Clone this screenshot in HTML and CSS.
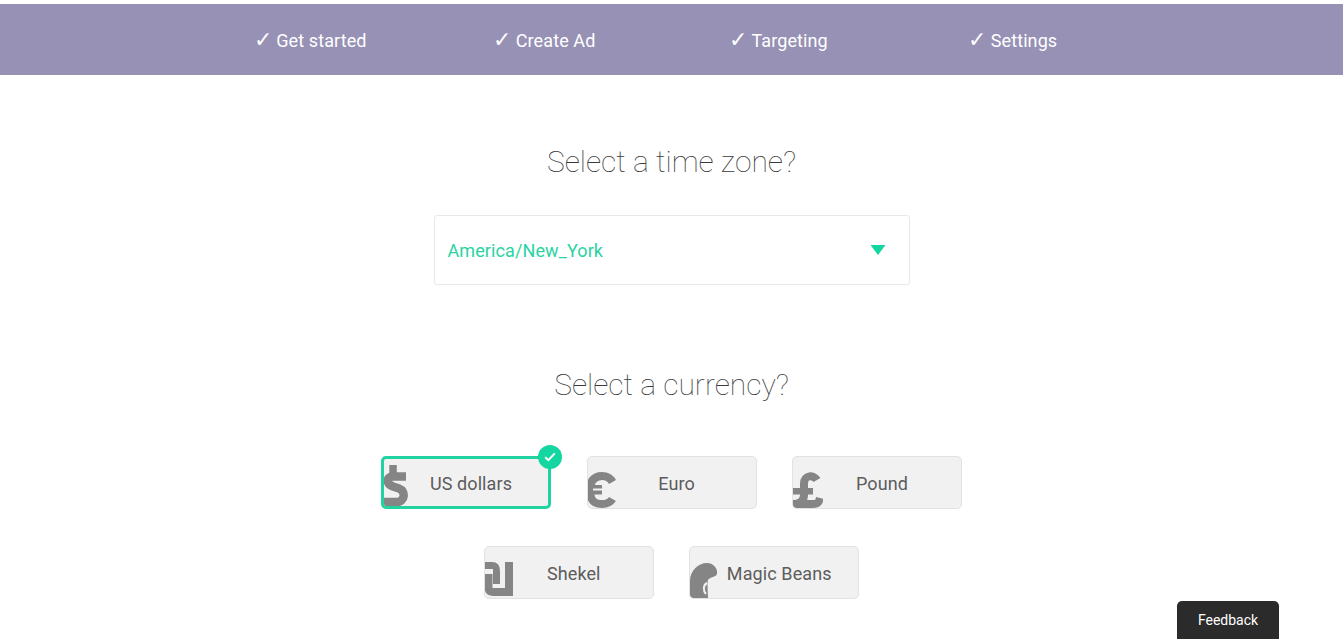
FILE: index.html
```html
<!DOCTYPE html>
<html lang="en">
<head>
<meta charset="utf-8">
<title>Select a time zone</title>
<link rel="stylesheet" href="styles.css">
</head>
<body>
<nav class="steps">
  <div class="step"><span class="check">✓</span> Get started</div>
  <div class="step"><span class="check">✓</span> Create Ad</div>
  <div class="step"><span class="check">✓</span> Targeting</div>
  <div class="step"><span class="check">✓</span> Settings</div>
</nav>
<main class="content">
  <h2 class="title">Select a time zone?</h2>
  <div class="select">
    <span>America/New_York</span>
    <svg class="caret" width="16" height="10" viewBox="0 0 16 10"><path d="M0.5 0H15.5L8 10Z"/></svg>
  </div>
  <h2 class="title title-currency">Select a currency?</h2>
  <div class="currencies">
    <div class="row">
      <div class="card card-selected">
        <div class="card-inner">
          <svg class="icon" width="30" height="47" viewBox="0 0 30 47"><rect x="5.300" y="6" width="7.500" height="12"/><rect x="5.300" y="42" width="7.500" height="6"/><path class="stroke" stroke-width="8.500" d="M22 17.500H9C2 17.500 2 25 9 27.500L15 29.500C22 32 21 43 13 43H-2"/></svg>
          <span class="label">US dollars</span>
        </div>
        <span class="badge"><svg width="12" height="10" viewBox="0 0 12 10"><path d="M1.200 5.200L4.400 8.200L10.800 1.400" fill="none" stroke="#fff" stroke-width="2"/></svg></span>
      </div>
      <div class="card">
        <div class="card-inner">
          <svg class="icon" width="30" height="51" viewBox="0 0 30 51"><path class="stroke" stroke-width="8" d="M24.500 25C22 20.500 19 19 14 19C5 19 2 25 2 33C2 42 5 47 14 47C19 47 22 46 24.500 42"/><rect x="0" y="28" width="14" height="9.500"/><rect class="gap" x="5" y="31.500" width="9" height="2"/></svg>
          <span class="label">Euro</span>
        </div>
      </div>
      <div class="card">
        <div class="card-inner">
          <svg class="icon" width="30" height="51" viewBox="0 0 30 51"><path class="stroke" stroke-width="8" d="M24 23C21 18 11 17 11 27V38C11 44 7 47 0 47H20C25 47 26 45 27 41"/><rect x="0" y="31" width="20" height="6.500"/></svg>
          <span class="label">Pound</span>
        </div>
      </div>
    </div>
    <div class="row">
      <div class="card">
        <div class="card-inner">
          <svg class="icon" width="30" height="51" viewBox="0 0 30 51"><path class="stroke" stroke-width="7" d="M-2 18.500H7C11 18.500 11.500 20 11.500 24V37"/><path class="stroke" stroke-width="8" d="M24 15V45H8C4 45 3.500 43 3.500 40V27"/></svg>
          <span class="label">Shekel</span>
        </div>
      </div>
      <div class="card">
        <div class="card-inner">
          <svg class="icon" width="30" height="51" viewBox="0 0 30 51"><path d="M0 51V34C0 24 8 16 17 16C24 16 28 22 27 27C25 31 21 29 18 33C17 36 18 44 18 51Z"/><path class="stroke-light" stroke-width="2" d="M17 36C13 38 13 44 16 47"/></svg>
          <span class="label">Magic Beans</span>
        </div>
      </div>
    </div>
  </div>
</main>
<button class="feedback" type="button">Feedback</button>
</body>
</html>
```

FILE: styles.css
```css
* {
  box-sizing: border-box;
}

html,
body {
  height: 100%;
}

body {
  margin: 0;
  padding-top: 4px;
  background: #fff;
  font-family: Roboto, "Liberation Sans", sans-serif;
  overflow: hidden;
}

.steps {
  display: grid;
  grid-template-columns: repeat(4, 234.2px);
  height: 71px;
  padding-left: 193px;
  align-items: center;
  background: #9691b5;
  color: #fff;
  font-size: 18px;
  letter-spacing: 0.1px;
}

.step {
  text-align: center;
}

.check {
  font-size: 22px;
  line-height: 1;
}

.content {
  display: flex;
  flex-direction: column;
  align-items: center;
}

.title {
  margin: 69px 0 0;
  font-size: 30px;
  font-weight: 100;
  line-height: 36px;
  color: #3a3a3a;
}

.title-currency {
  margin-top: 82px;
}

.select {
  display: flex;
  align-items: center;
  justify-content: space-between;
  width: 476px;
  height: 70px;
  margin-top: 35px;
  padding: 0 23px 0 13px;
  border: 1px solid #e8e8e8;
  border-radius: 3px;
  color: #2bd3a2;
  font-size: 18px;
  letter-spacing: 0.1px;
}

.caret {
  fill: #14d6a0;
}

.currencies {
  display: flex;
  flex-direction: column;
  gap: 37px;
  margin-top: 53px;
}

.row {
  display: flex;
  justify-content: center;
  gap: 35.5px;
}

.card {
  position: relative;
  width: 170px;
  height: 53px;
  border: 1px solid #e2e2e2;
  border-radius: 5px;
  background: #f1f1f1;
  color: #5c5c5c;
  font-size: 18px;
  letter-spacing: 0.1px;
}

.card-selected {
  border: 3px solid #22d3a2;
}

.card-inner {
  display: flex;
  height: 100%;
  overflow: hidden;
  border-radius: 4px;
}

.card-selected .card-inner {
  border-radius: 2px;
}

.icon {
  flex: none;
  margin-right: -20px;
  fill: #858585;
}

.stroke {
  fill: none;
  stroke: #858585;
}

.stroke-light {
  fill: none;
  stroke: #f1f1f1;
}

.gap {
  fill: #f1f1f1;
}

.label {
  flex: 1;
  align-self: center;
  padding-top: 2px;
  text-align: center;
  white-space: nowrap;
}

.badge {
  position: absolute;
  top: -14px;
  right: -14px;
  display: flex;
  align-items: center;
  justify-content: center;
  width: 24px;
  height: 24px;
  border-radius: 50%;
  background: #14d6a0;
}

.feedback {
  position: fixed;
  right: 64px;
  bottom: 0;
  width: 102px;
  height: 38px;
  padding: 0;
  border: 0;
  border-radius: 5px 5px 0 0;
  background: #2b2b2b;
  color: #fff;
  font-family: Roboto, "Liberation Sans", sans-serif;
  font-size: 14px;
}
```
